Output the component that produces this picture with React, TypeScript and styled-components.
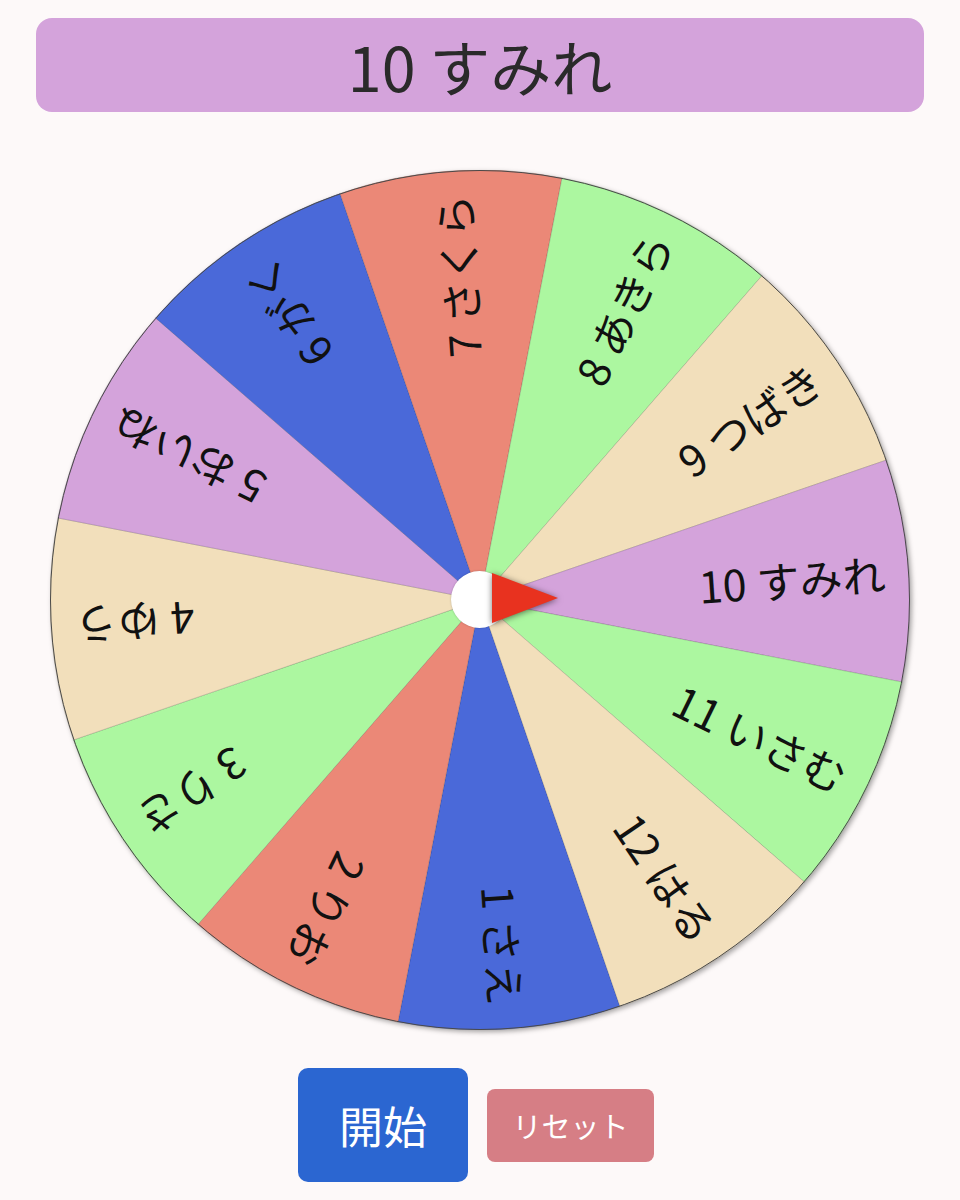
import React from "react";
import styled, { createGlobalStyle } from "styled-components";

const GlobalStyle = createGlobalStyle`
  html, body {
    margin: 0;
    padding: 0;
    background: #fdf9f9;
    font-family: "Noto Sans CJK JP", "Noto Sans", sans-serif;
  }
`;

const Page = styled.div`
  display: flex;
  flex-direction: column;
  align-items: center;
  padding: 18px 36px 0;
`;

const ResultBar = styled.div`
  align-self: stretch;
  height: 94px;
  border-radius: 16px;
  background: #d4a3db;
  color: #2a2a2a;
  font-size: 61px;
  display: flex;
  align-items: center;
  justify-content: center;
  line-height: 1;
`;

const WheelWrap = styled.div`
  position: relative;
  width: 860px;
  height: 860px;
  margin-top: 58px;
`;

const WheelDisc = styled.div`
  width: 860px;
  height: 860px;
  border-radius: 50%;
  box-shadow: 2px 2px 5px rgba(0, 0, 0, 0.35);
`;

const WheelSvg = styled.svg`
  display: block;
  width: 860px;
  height: 860px;
`;

const Hub = styled.div`
  position: absolute;
  left: 401px;
  top: 401px;
  width: 57px;
  height: 57px;
  border-radius: 50%;
  background: #ffffff;
  box-shadow: 0 0 2px rgba(0, 0, 0, 0.25);
`;

const Pointer = styled.svg`
  position: absolute;
  left: 441px;
  top: 403px;
  width: 70px;
  height: 54px;
  overflow: visible;
  filter: drop-shadow(0 1px 3px rgba(0, 0, 0, 0.55));
`;

const ButtonRow = styled.div`
  display: flex;
  align-items: center;
  gap: 19px;
  margin-top: 38px;
  margin-right: 8px;
`;

const StartButton = styled.button`
  width: 170px;
  height: 114px;
  border: none;
  border-radius: 10px;
  background: #2b66d1;
  color: #ffffff;
  font-family: "Noto Sans CJK JP", sans-serif;
  font-size: 44px;
  padding: 0;
`;

const ResetButton = styled.button`
  width: 167px;
  height: 73px;
  border: none;
  border-radius: 8px;
  background: #d67e85;
  color: #ffffff;
  font-family: "Noto Sans CJK JP", sans-serif;
  font-size: 29px;
  padding: 0;
`;

const COLORS: Record<number, string> = {
  1: "#4a69d9",
  2: "#eb8877",
  3: "#acf7a0",
  4: "#f2dfbb",
  5: "#d4a3db",
  6: "#4a69d9",
  7: "#eb8877",
  8: "#acf7a0",
  9: "#f2dfbb",
  10: "#d4a3db",
  11: "#acf7a0",
  12: "#f2dfbb",
};

const NAMES: Record<number, string> = {
  1: "さえ",
  2: "りお",
  3: "りさ",
  4: "ゆう",
  5: "おいね",
  6: "がく",
  7: "さくら",
  8: "あきら",
  9: "つばき",
  10: "すみれ",
  11: "いさむ",
  12: "はる",
};

const R = 430;
const rad = (d: number) => (d * Math.PI) / 180;

function sectorPath(a: number) {
  const a0 = rad(a - 15);
  const a1 = rad(a + 15);
  const x0 = R * Math.cos(a0);
  const y0 = R * Math.sin(a0);
  const x1 = R * Math.cos(a1);
  const y1 = R * Math.sin(a1);
  return `M0 0 L${x0.toFixed(2)} ${y0.toFixed(2)} A${R} ${R} 0 0 1 ${x1.toFixed(2)} ${y1.toFixed(2)} Z`;
}

export default function App() {
  const items = Array.from({ length: 12 }, (_, i) => i + 1);
  return (
    <>
      <GlobalStyle />
      <Page>
        <ResultBar>10 すみれ</ResultBar>
        <WheelWrap>
          <WheelDisc>
            <WheelSvg viewBox="-430 -430 860 860">
              {items.map((k) => {
                const a = -4 + (k - 10) * 30;
                return (
                  <path
                    key={`s${k}`}
                    d={sectorPath(a)}
                    fill={COLORS[k]}
                    stroke="rgba(0,0,0,0.18)"
                    strokeWidth={0.8}
                  />
                );
              })}
              <circle cx={0} cy={0} r={429.5} fill="none" stroke="#4a4a4a" strokeWidth={1} />
              {items.map((k) => {
                const a = -4 + (k - 10) * 30;
                return (
                  <text
                    key={`t${k}`}
                    transform={`rotate(${a})`}
                    x={406}
                    y={0}
                    textAnchor="end"
                    dominantBaseline="central"
                    fontSize={43}
                    fill="#111"
                    fontFamily='"Noto Sans CJK JP", sans-serif'
                  >
                    <tspan>{k}</tspan>
                    <tspan dx={10}>{NAMES[k]}</tspan>
                  </text>
                );
              })}
            </WheelSvg>
          </WheelDisc>
          <Hub />
          <Pointer viewBox="0 0 70 54">
            <polygon points="1,0 67,25 1,50" fill="#e8321f" />
          </Pointer>
        </WheelWrap>
        <ButtonRow>
          <StartButton>開始</StartButton>
          <ResetButton>リセット</ResetButton>
        </ButtonRow>
      </Page>
    </>
  );
}
